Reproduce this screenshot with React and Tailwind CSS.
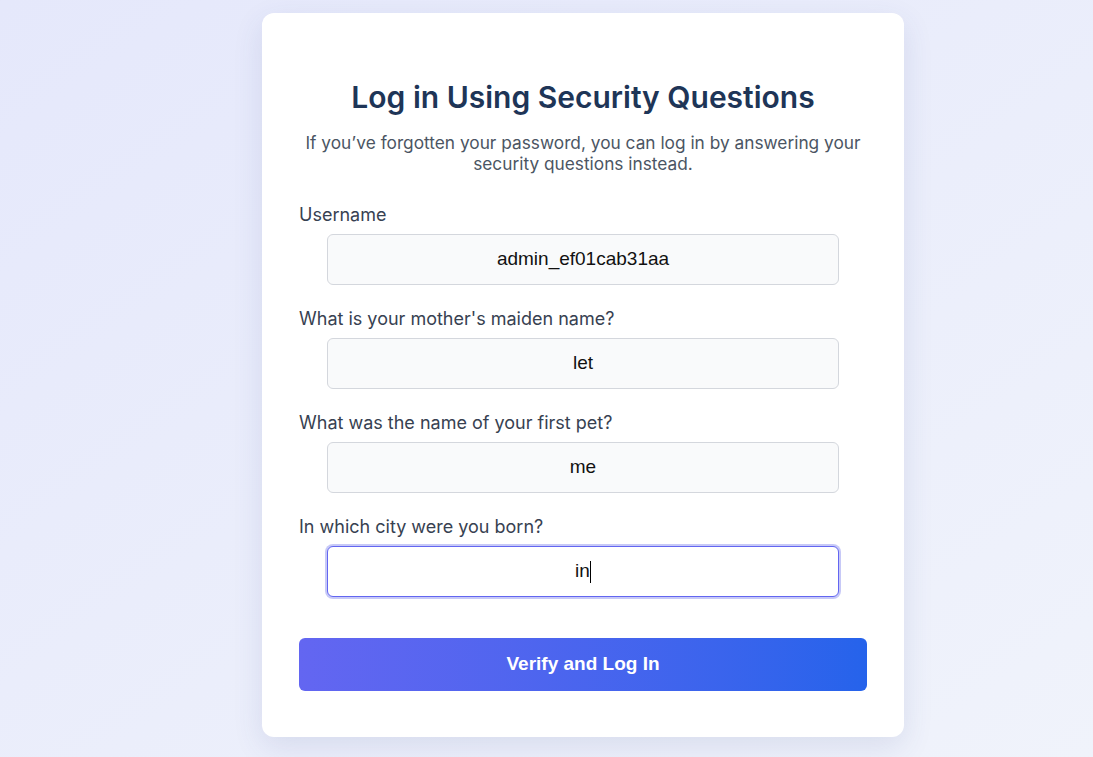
import React from "react";

const questions = [
  { label: "Username", value: "admin_ef01cab31aa" },
  { label: "What is your mother's maiden name?", value: "let" },
  { label: "What was the name of your first pet?", value: "me" },
  { label: "In which city were you born?", value: "in", focused: true },
];

export default function App() {
  return (
    <div
      className="min-h-[757px] w-full bg-gradient-to-br from-[#e5e8fb] to-[#f0f3fb] flex pl-[262px] pt-[13px]"
      style={{ fontFamily: "Inter, 'Noto Sans', sans-serif" }}
    >
      <div className="w-[642px] h-[724px] bg-white rounded-xl shadow-[0_10px_30px_rgba(60,70,140,0.12)] px-[37px] pt-[66px]">
        <h1 className="text-center text-[30px] leading-[36px] font-semibold text-[#1e3557]">
          Log in Using Security Questions
        </h1>
        <p className="mt-[17px] text-center text-[17.3px] leading-[21px] text-[#4b5563]">
          If you’ve forgotten your password, you can log in by answering your security questions instead.
        </p>

        <div className="mt-[28px] flex flex-col">
          {questions.map((q, i) => (
            <div key={i} className={i > 0 ? "mt-[21px]" : ""}>
              <label className="block text-[18px] leading-[26px] text-[#374151]">{q.label}</label>
              <div
                className={
                  "mx-auto mt-[6px] w-[90%] h-[51px] rounded-md flex items-center justify-center text-[19px] text-[#111] " +
                  (q.focused
                    ? "bg-white border border-[#6366f1] ring-2 ring-[#c7c9f7]"
                    : "bg-[#f9fafb] border border-[#d4d7dd]")
                }
                style={{ fontFamily: "'Liberation Sans', Arial, sans-serif" }}
              >
                <span>{q.value}</span>
                {q.focused && <span className="w-px h-[22px] bg-black" />}
              </div>
            </div>
          ))}
        </div>

        <button
          className="mt-[41px] w-full h-[53px] rounded-md bg-gradient-to-r from-[#6366f1] to-[#2563eb] text-white text-[19px] font-bold"
          style={{ fontFamily: "'Liberation Sans', Arial, sans-serif" }}
        >
          Verify and Log In
        </button>
      </div>
    </div>
  );
}
